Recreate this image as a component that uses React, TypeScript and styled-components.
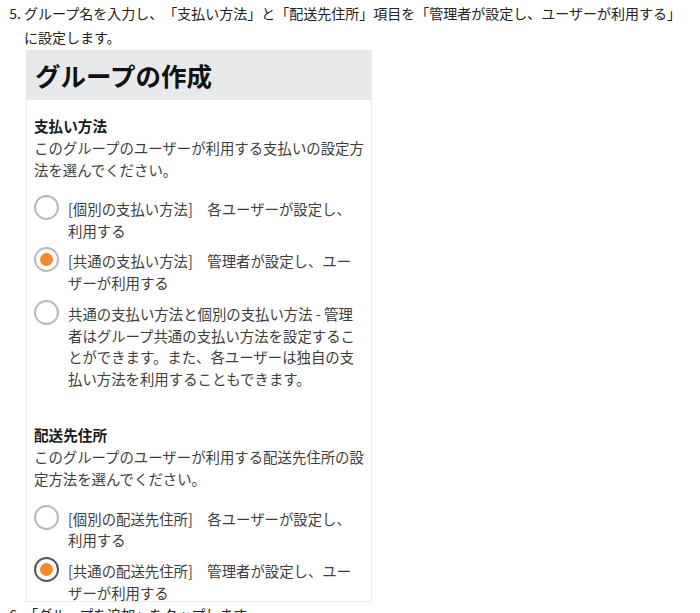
import React from "react";
import styled, { createGlobalStyle } from "styled-components";

const Global = createGlobalStyle`
  html, body {
    margin: 0;
    padding: 0;
    background: #ffffff;
  }
  body {
    font-family: "Noto Sans CJK JP", "Noto Sans", sans-serif;
    color: #222222;
    overflow: hidden;
    text-spacing-trim: space-all;
  }
`;

const Steps = styled.ol`
  margin: 0;
  padding: 1px 12px 0 24px;
  font-size: 14px;
  line-height: 24px;
  color: #222222;
`;

const Step = styled.li`
  margin: 0;
`;

const Shot = styled.div`
  margin: 1px 0 0 2px;
  width: 346px;
  background: #ffffff;
`;

const ShotHeader = styled.div`
  height: 50px;
  background: #e8e9ea;
  display: flex;
  align-items: center;
  padding-left: 9px;
  font-size: 25.5px;
  font-weight: 700;
  color: #111111;
`;

const ShotBody = styled.div`
  border: 1px solid #ebebeb;
  border-top: none;
  height: 502px;
  box-sizing: border-box;
  padding: 15px 0 0 7px;
  font-size: 14.4px;
  color: #3d3d3d;
`;

const Section = styled.section<{ $gap?: number }>`
  margin-top: ${(p) => p.$gap ?? 0}px;
`;

const Title = styled.div`
  font-size: 14.6px;
  font-weight: 700;
  color: #1a1a1a;
  line-height: 22px;
`;

const Desc = styled.div`
  line-height: 22px;
  white-space: nowrap;
`;

const Options = styled.div<{ $top: number }>`
  margin-top: ${(p) => p.$top}px;
  display: flex;
  flex-direction: column;
  gap: 9px;
`;

const Option = styled.div`
  display: flex;
  align-items: flex-start;
  gap: 9px;
`;

const Radio = styled.span<{ $checked?: boolean; $focus?: boolean }>`
  flex: none;
  width: 25px;
  height: 25px;
  margin-top: -3px;
  box-sizing: border-box;
  border-radius: 50%;
  border: ${(p) => (p.$focus ? "2.5px solid #555555" : "2px solid #b9b9b9")};
  display: flex;
  align-items: center;
  justify-content: center;
  background: #ffffff;
  &::after {
    content: "";
    display: ${(p) => (p.$checked ? "block" : "none")};
    width: 13px;
    height: 13px;
    border-radius: 50%;
    background: #f28a2c;
  }
`;

const OptionText = styled.div`
  line-height: 21.7px;
  white-space: nowrap;
`;

type Opt = { lines: string[]; checked?: boolean; focus?: boolean };

const payment: Opt[] = [
  { lines: ["[個別の支払い方法]\u3000各ユーザーが設定し、", "利用する"] },
  {
    lines: ["[共通の支払い方法]\u3000管理者が設定し、ユー", "ザーが利用する"],
    checked: true,
  },
  {
    lines: [
      "共通の支払い方法と個別の支払い方法 - 管理",
      "者はグループ共通の支払い方法を設定するこ",
      "とができます。また、各ユーザーは独自の支",
      "払い方法を利用することもできます。",
    ],
  },
];

const shipping: Opt[] = [
  { lines: ["[個別の配送先住所]\u3000各ユーザーが設定し、", "利用する"] },
  {
    lines: ["[共通の配送先住所]\u3000管理者が設定し、ユー", "ザーが利用する"],
    checked: true,
    focus: true,
  },
];

const Lines = ({ lines }: { lines: string[] }) => (
  <>
    {lines.map((l, i) => (
      <React.Fragment key={i}>
        {i > 0 && <br />}
        {l}
      </React.Fragment>
    ))}
  </>
);

const OptionList = ({ opts, top }: { opts: Opt[]; top: number }) => (
  <Options $top={top}>
    {opts.map((o, i) => (
      <Option key={i}>
        <Radio $checked={o.checked} $focus={o.focus} />
        <OptionText>
          <Lines lines={o.lines} />
        </OptionText>
      </Option>
    ))}
  </Options>
);

export default function App() {
  return (
    <>
      <Global />
      <Steps start={5}>
        <Step>
          グループ名を入力し、「支払い方法」と「配送先住所」項目を「管理者が設定し、ユーザーが利用する」に設定します。
          <Shot>
            <ShotHeader>グループの作成</ShotHeader>
            <ShotBody>
              <Section>
                <Title>支払い方法</Title>
                <Desc>
                  <Lines
                    lines={[
                      "このグループのユーザーが利用する支払いの設定方",
                      "法を選んでください。",
                    ]}
                  />
                </Desc>
                <OptionList opts={payment} top={17} />
              </Section>
              <Section $gap={34}>
                <Title>配送先住所</Title>
                <Desc>
                  <Lines
                    lines={[
                      "このグループのユーザーが利用する配送先住所の設",
                      "定方法を選んでください。",
                    ]}
                  />
                </Desc>
                <OptionList opts={shipping} top={18} />
              </Section>
            </ShotBody>
          </Shot>
        </Step>
        <Step>「グループを追加」をタップします。</Step>
      </Steps>
    </>
  );
}
